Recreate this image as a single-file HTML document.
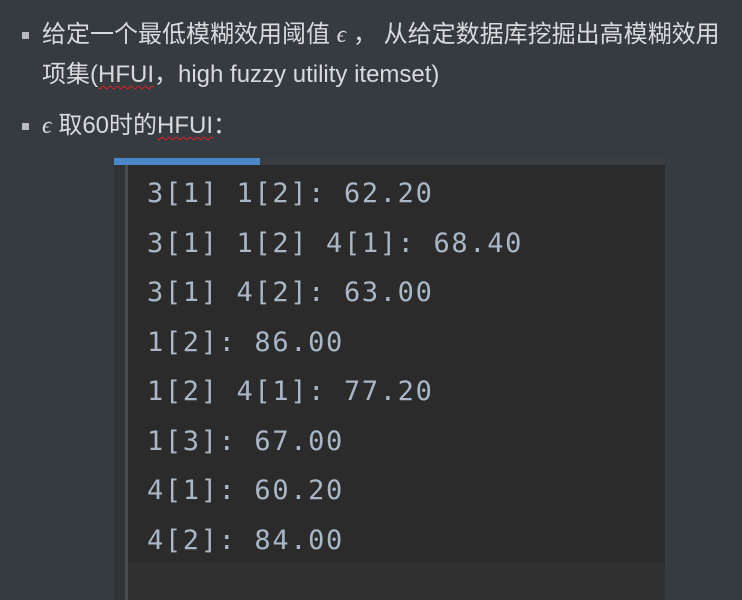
<!DOCTYPE html>
<html><head><meta charset="utf-8"><style>
body{margin:0;width:742px;height:600px;background:#363b40;overflow:hidden;position:relative;font-family:"Liberation Sans","Noto Sans CJK SC",sans-serif;color:#d8dbde}
.li{position:absolute;left:42px;font-size:24px;line-height:36px;white-space:nowrap}
.b{position:absolute;left:22px;width:7px;height:7px;background:#b8bcc0}
.u{text-decoration:underline wavy #e02020;text-decoration-thickness:1px;text-underline-offset:3px}
.code{position:absolute;left:114px;top:158px;width:551px;height:442px;background:#2b2b2b}
.top{position:absolute;left:114px;top:157px;width:551px;height:8px;background:#3a3d40}
.blue{position:absolute;left:114px;top:158px;width:146px;height:7px;background:#4a88c7}
.gut{position:absolute;left:114px;top:165px;width:12px;height:435px;background:#313335}
.gl{position:absolute;left:125px;top:165px;width:3px;height:435px;background:#4a4c4e}
.bot{position:absolute;left:128px;top:562px;width:537px;height:38px;background:#313131}
.ln{position:absolute;left:147px;font-family:"DejaVu Sans Mono","Liberation Mono",monospace;font-size:27px;letter-spacing:1.65px;color:#a9b7c6;line-height:30px}
</style></head><body>
<div class="b" style="top:32px"></div>
<div class="li" style="top:17px">给定一个最低模糊效用阈值 <i style="font-family:'Liberation Serif',serif">ϵ</i> ， 从给定数据库挖掘出高模糊效用</div>
<div class="li" style="top:57px">项集(<span class="u">HFUI</span>，high fuzzy utility itemset)</div>
<div class="b" style="top:123px"></div>
<div class="li" style="top:108px"><i style="font-family:'Liberation Serif',serif">ϵ</i> 取60时的<span class="u">HFUI</span>：</div>
<div class="code"></div><div class="top"></div><div class="blue"></div><div class="gut"></div><div class="gl"></div><div class="bot"></div>
<div class="ln" style="top:179px">3[1] 1[2]: 62.20</div>
<div class="ln" style="top:229px">3[1] 1[2] 4[1]: 68.40</div>
<div class="ln" style="top:278px">3[1] 4[2]: 63.00</div>
<div class="ln" style="top:328px">1[2]: 86.00</div>
<div class="ln" style="top:377px">1[2] 4[1]: 77.20</div>
<div class="ln" style="top:427px">1[3]: 67.00</div>
<div class="ln" style="top:476px">4[1]: 60.20</div>
<div class="ln" style="top:526px">4[2]: 84.00</div>
</body></html>
